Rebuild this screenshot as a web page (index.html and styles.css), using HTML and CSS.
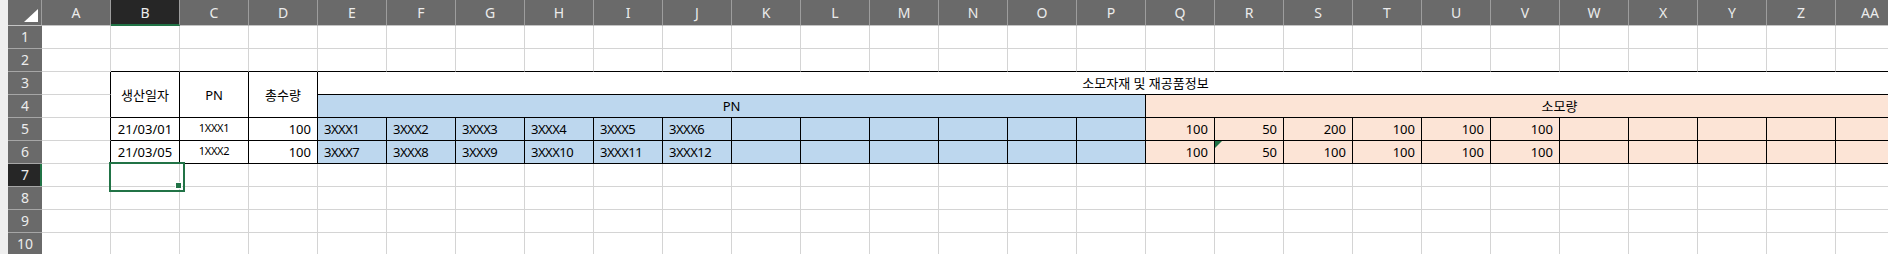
FILE: index.html
```html
<!DOCTYPE html>
<html lang="ko">

<head>
    <meta charset="UTF-8">
    <meta name="viewport" content="width=device-width, initial-scale=1.0">
    <title>생산정보</title>
    <link rel="stylesheet" href="styles.css">
</head>

<body>
    <div class="page">
        <div class="strip"></div>
        <div class="sheet">
            <!-- column headers -->
            <div class="corner"><span class="tri"></span></div>
            <div class="ch">A</div><div class="ch on">B</div><div class="ch">C</div><div class="ch">D</div>
            <div class="ch">E</div><div class="ch">F</div><div class="ch">G</div><div class="ch">H</div>
            <div class="ch">I</div><div class="ch">J</div><div class="ch">K</div><div class="ch">L</div>
            <div class="ch">M</div><div class="ch">N</div><div class="ch">O</div><div class="ch">P</div>
            <div class="ch">Q</div><div class="ch">R</div><div class="ch">S</div><div class="ch">T</div>
            <div class="ch">U</div><div class="ch">V</div><div class="ch">W</div><div class="ch">X</div>
            <div class="ch">Y</div><div class="ch">Z</div><div class="ch">AA</div><div class="ch">AB</div>

            <!-- row 1 -->
            <div class="rh">1</div>
            <div class="c"></div><div class="c"></div><div class="c"></div><div class="c"></div>
            <div class="c"></div><div class="c"></div><div class="c"></div><div class="c"></div>
            <div class="c"></div><div class="c"></div><div class="c"></div><div class="c"></div>
            <div class="c"></div><div class="c"></div><div class="c"></div><div class="c"></div>
            <div class="c"></div><div class="c"></div><div class="c"></div><div class="c"></div>
            <div class="c"></div><div class="c"></div><div class="c"></div><div class="c"></div>
            <div class="c"></div><div class="c"></div><div class="c"></div><div class="c"></div>

            <!-- row 2 -->
            <div class="rh">2</div>
            <div class="c"></div><div class="c tt"></div><div class="c tt"></div><div class="c tt"></div>
            <div class="c tt"></div><div class="c tt"></div><div class="c tt"></div><div class="c tt"></div>
            <div class="c tt"></div><div class="c tt"></div><div class="c tt"></div><div class="c tt"></div>
            <div class="c tt"></div><div class="c tt"></div><div class="c tt"></div><div class="c tt"></div>
            <div class="c tt"></div><div class="c tt"></div><div class="c tt"></div><div class="c tt"></div>
            <div class="c tt"></div><div class="c tt"></div><div class="c tt"></div><div class="c tt"></div>
            <div class="c tt"></div><div class="c tt"></div><div class="c tt"></div><div class="c tt"></div>

            <!-- row 3 -->
            <div class="rh">3</div>
            <div class="c tl"></div>
            <div class="t hd">생산일자</div>
            <div class="t hd">PN</div>
            <div class="t hd">총수량</div>
            <div class="t title">소모자재 및 재공품정보</div>

            <!-- row 4 -->
            <div class="rh">4</div>
            <div class="c tl"></div>
            <div class="t grp blue">PN</div>
            <div class="t grp peach">소모량</div>

            <!-- row 5 -->
            <div class="rh">5</div>
            <div class="c tl"></div>
            <div class="t mid">21/03/01</div>
            <div class="t sm">1XXX1</div>
            <div class="t num">100</div>
            <div class="t blue code">3XXX1</div><div class="t blue code">3XXX2</div><div class="t blue code">3XXX3</div>
            <div class="t blue code">3XXX4</div><div class="t blue code">3XXX5</div><div class="t blue code">3XXX6</div>
            <div class="t blue"></div><div class="t blue"></div><div class="t blue"></div>
            <div class="t blue"></div><div class="t blue"></div><div class="t blue"></div>
            <div class="t peach num">100</div><div class="t peach num">50</div><div class="t peach num">200</div>
            <div class="t peach num">100</div><div class="t peach num">100</div><div class="t peach num">100</div>
            <div class="t peach"></div><div class="t peach"></div><div class="t peach"></div>
            <div class="t peach"></div><div class="t peach"></div><div class="t peach"></div>

            <!-- row 6 -->
            <div class="rh">6</div>
            <div class="c tl"></div>
            <div class="t mid">21/03/05</div>
            <div class="t sm">1XXX2</div>
            <div class="t num">100</div>
            <div class="t blue code">3XXX7</div><div class="t blue code">3XXX8</div><div class="t blue code">3XXX9</div>
            <div class="t blue code">3XXX10</div><div class="t blue code">3XXX11</div><div class="t blue code">3XXX12</div>
            <div class="t blue"></div><div class="t blue"></div><div class="t blue"></div>
            <div class="t blue"></div><div class="t blue"></div><div class="t blue"></div>
            <div class="t peach num">100</div><div class="t peach num warn">50</div><div class="t peach num">100</div>
            <div class="t peach num">100</div><div class="t peach num">100</div><div class="t peach num">100</div>
            <div class="t peach"></div><div class="t peach"></div><div class="t peach"></div>
            <div class="t peach"></div><div class="t peach"></div><div class="t peach"></div>

            <!-- row 7 (active cell B7) -->
            <div class="rh on">7</div>
            <div class="c"></div><div class="c cur"><span class="handle"></span></div><div class="c"></div><div class="c"></div>
            <div class="c"></div><div class="c"></div><div class="c"></div><div class="c"></div>
            <div class="c"></div><div class="c"></div><div class="c"></div><div class="c"></div>
            <div class="c"></div><div class="c"></div><div class="c"></div><div class="c"></div>
            <div class="c"></div><div class="c"></div><div class="c"></div><div class="c"></div>
            <div class="c"></div><div class="c"></div><div class="c"></div><div class="c"></div>
            <div class="c"></div><div class="c"></div><div class="c"></div><div class="c"></div>

            <!-- row 8 -->
            <div class="rh">8</div>
            <div class="c"></div><div class="c"></div><div class="c"></div><div class="c"></div>
            <div class="c"></div><div class="c"></div><div class="c"></div><div class="c"></div>
            <div class="c"></div><div class="c"></div><div class="c"></div><div class="c"></div>
            <div class="c"></div><div class="c"></div><div class="c"></div><div class="c"></div>
            <div class="c"></div><div class="c"></div><div class="c"></div><div class="c"></div>
            <div class="c"></div><div class="c"></div><div class="c"></div><div class="c"></div>
            <div class="c"></div><div class="c"></div><div class="c"></div><div class="c"></div>

            <!-- row 9 -->
            <div class="rh">9</div>
            <div class="c"></div><div class="c"></div><div class="c"></div><div class="c"></div>
            <div class="c"></div><div class="c"></div><div class="c"></div><div class="c"></div>
            <div class="c"></div><div class="c"></div><div class="c"></div><div class="c"></div>
            <div class="c"></div><div class="c"></div><div class="c"></div><div class="c"></div>
            <div class="c"></div><div class="c"></div><div class="c"></div><div class="c"></div>
            <div class="c"></div><div class="c"></div><div class="c"></div><div class="c"></div>
            <div class="c"></div><div class="c"></div><div class="c"></div><div class="c"></div>

            <!-- row 10 -->
            <div class="rh">10</div>
            <div class="c"></div><div class="c"></div><div class="c"></div><div class="c"></div>
            <div class="c"></div><div class="c"></div><div class="c"></div><div class="c"></div>
            <div class="c"></div><div class="c"></div><div class="c"></div><div class="c"></div>
            <div class="c"></div><div class="c"></div><div class="c"></div><div class="c"></div>
            <div class="c"></div><div class="c"></div><div class="c"></div><div class="c"></div>
            <div class="c"></div><div class="c"></div><div class="c"></div><div class="c"></div>
            <div class="c"></div><div class="c"></div><div class="c"></div><div class="c"></div>
        </div>
    </div>
</body>

</html>
```

FILE: styles.css
```css
* {
    margin: 0;
    padding: 0;
    box-sizing: border-box;
}

body {
    background: #fff;
    overflow: hidden;
    font-family: "Noto Sans", "Noto Sans CJK KR", sans-serif;
}

.page {
    display: flex;
    width: 1888px;
    height: 254px;
    overflow: hidden;
}

.strip {
    flex: none;
    width: 8px;
    background: #efefef;
}

.sheet {
    flex: none;
    display: grid;
    grid-template-columns: 34px repeat(28, 69px);
    grid-template-rows: 26px repeat(10, 23px);
}

/* headers */
.corner {
    display: flex;
    justify-content: flex-end;
    align-items: flex-end;
    padding: 0 3px 3px 0;
    background: #6a6a6a;
    border-right: 1px solid #9d9d9d;
    border-bottom: 1px solid #c4c4c4;
}

.tri {
    width: 0;
    height: 0;
    border-left: 14px solid transparent;
    border-bottom: 13px solid #fff;
}

.ch {
    background: #6a6a6a;
    color: #ececec;
    font-size: 14px;
    line-height: 25px;
    text-align: center;
    border-right: 1px solid #9d9d9d;
    border-bottom: 1px solid #c4c4c4;
}

.ch.on {
    background: #262626;
    border-bottom: 2px solid #217346;
}

.rh {
    background: #6a6a6a;
    color: #ececec;
    font-size: 14px;
    line-height: 22px;
    text-align: center;
    border-bottom: 1px solid #a6a6a6;
}

.rh.on {
    background: #262626;
    box-shadow: inset -2px 0 #217346;
}

/* cells */
.c,
.t {
    padding: 0 6px;
    font-size: 13px;
    line-height: 22px;
    color: #000;
    white-space: nowrap;
    border-right: 1px solid #d4d4d4;
    border-bottom: 1px solid #d4d4d4;
}

.t {
    border-color: #000;
}

.tl {
    border-right-color: #000;
}

.tt {
    border-bottom-color: #000;
}

.hd {
    grid-row: span 2;
    display: flex;
    align-items: center;
    justify-content: center;
}

.title {
    grid-column: span 24;
    text-align: center;
}

.grp {
    grid-column: span 12;
    text-align: center;
}

.blue {
    background: #bdd7ee;
}

.peach {
    background: #fce4d6;
}

.mid {
    text-align: center;
}

.num {
    text-align: right;
}

.code {
    letter-spacing: -0.5px;
}

.sm {
    font-size: 11px;
    line-height: 19px;
    text-align: center;
    letter-spacing: -0.3px;
}

.warn {
    position: relative;
}

.warn::before {
    content: "";
    position: absolute;
    top: 0;
    left: 0;
    border-top: 7px solid #1e7145;
    border-right: 7px solid transparent;
}

/* active cell */
.cur {
    position: relative;
}

.cur::after {
    content: "";
    position: absolute;
    left: -2px;
    top: -2px;
    width: 72px;
    height: 26px;
    border: 2px solid #217346;
}

.handle {
    position: absolute;
    left: 64px;
    top: 18px;
    width: 7px;
    height: 7px;
    background: #217346;
    border: 1px solid #fff;
    z-index: 1;
}
```
